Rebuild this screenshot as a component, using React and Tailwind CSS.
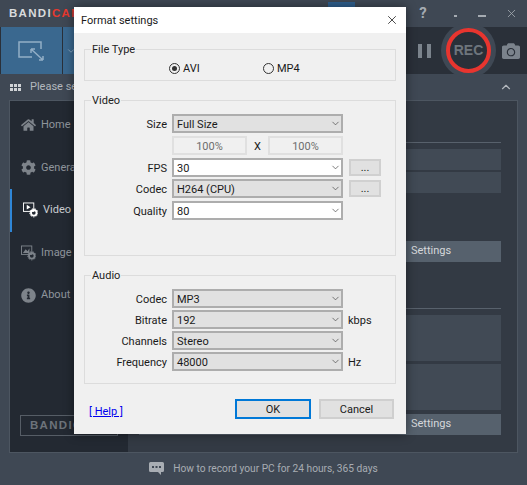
import { ChevronDown, ChevronUp, X } from "lucide-react";
import { FaHome, FaCog, FaInfoCircle, FaCamera } from "react-icons/fa";

const navItems = [
  { label: "Home", icon: <FaHome size={16} /> },
  { label: "General", icon: <FaCog size={15} /> },
  { label: "Video", icon: <VideoIcon />, active: true },
  { label: "Image", icon: <ImageIcon /> },
  { label: "About", icon: <FaInfoCircle size={15} /> },
];

function VideoIcon() {
  return (
    <svg width="16" height="16" viewBox="0 0 16 16" className="text-white">
      <rect x="0.5" y="0.5" width="11" height="9" fill="none" stroke="currentColor" />
      <path d="M4 2.5v5l4-2.5z" fill="currentColor" />
      <circle cx="11.5" cy="11" r="3" fill="none" stroke="currentColor" strokeWidth="2" />
      <circle cx="11.5" cy="11" r="4.4" fill="none" stroke="currentColor" strokeDasharray="1.5 1.5" />
    </svg>
  );
}

function ImageIcon() {
  return (
    <svg width="16" height="16" viewBox="0 0 16 16">
      <rect x="0.5" y="0.5" width="11" height="9" fill="none" stroke="currentColor" />
      <path d="M2 8l3-4 2 2 2-3v5z" fill="currentColor" />
      <circle cx="11.5" cy="11" r="3" fill="none" stroke="currentColor" strokeWidth="2" />
      <circle cx="11.5" cy="11" r="4.4" fill="none" stroke="currentColor" strokeDasharray="1.5 1.5" />
    </svg>
  );
}

const TipIcon = () => (
  <svg width="15" height="14" viewBox="0 0 15 14">
    <path d="M1.5 0h12A1.5 1.5 0 0 1 15 1.5v7A1.5 1.5 0 0 1 13.5 10H12v3l-3-3H1.5A1.5 1.5 0 0 1 0 8.5v-7A1.5 1.5 0 0 1 1.5 0z" fill="#a8adb3" />
    <rect x="3" y="4" width="2" height="2" fill="#3f4854" />
    <rect x="6.5" y="4" width="2" height="2" fill="#3f4854" />
    <rect x="10" y="4" width="2" height="2" fill="#3f4854" />
  </svg>
);

const Select = ({ value, editable }) => (
  <div
    className={`flex h-[19px] w-[171px] items-center justify-between border-2 border-[#adadad] pl-[3px] ${
      editable ? "bg-white" : "bg-[#e1e1e1]"
    }`}
  >
    <span className="pt-[1px]">{value}</span>
    <ChevronDown size={11} strokeWidth={1.5} className="text-[#444]" />
  </div>
);

const Row = ({ label, value, editable, children, className = "" }) => (
  <div className={`flex items-center ${className}`}>
    <span className="w-[87px] pr-[5px] pt-[1px] text-right">{label}</span>
    <Select value={value} editable={editable} />
    {children}
  </div>
);

const MoreButton = () => (
  <div className="ml-[6px] flex h-[17px] w-[32px] items-center justify-center border-2 border-[#d0d0d0] bg-[#e1e1e1] leading-none">
    ...
  </div>
);

const Group = ({ title, className, children }) => (
  <fieldset className={`mx-[10px] border border-[#dcdcdc] ${className}`}>
    <legend className="ml-[6px] px-[1px] pt-[1px] leading-[13px] text-[#222]">{title}</legend>
    {children}
  </fieldset>
);

const FormatDialog = () => (
  <div className="absolute left-[74px] top-[7px] flex h-[427px] w-[332px] flex-col bg-[#f0f0f0] text-[11px] leading-none text-[#1a1a1a] shadow-[0_0_10px_rgba(0,0,0,0.45)] [font-family:Roboto,sans-serif]">
    <div className="flex h-[26px] shrink-0 items-center justify-between bg-white pl-[7px] pr-[7px] text-[11px]">
      <span>Format settings</span>
      <X size={14} strokeWidth={1.2} className="text-black" />
    </div>
    <Group title="File Type" className="mt-[9px] h-[39px]">
      <div className="flex pl-[84px] pt-[7px]">
        <div className="flex w-[94px] items-center gap-[3px]">
          <span className="flex h-[11px] w-[11px] items-center justify-center rounded-full border border-[#333]">
            <span className="h-[5px] w-[5px] rounded-full bg-[#333]" />
          </span>
          AVI
        </div>
        <div className="flex items-center gap-[3px]">
          <span className="h-[11px] w-[11px] rounded-full border border-[#333]" />
          MP4
        </div>
      </div>
    </Group>
    <Group title="Video" className="mt-[12px] h-[163px]">
      <div className="flex flex-col pt-[7px]">
        <Row label="Size" value="Full Size" />
        <div className="mt-[3px] flex items-center pl-[87px]">
          <div className="flex h-[19px] w-[75px] items-center justify-center border-2 border-[#e0e0e0] pt-[1px] text-[#6d6d6d]">100%</div>
          <span className="w-[21px] pt-[1px] text-center">X</span>
          <div className="flex h-[19px] w-[75px] items-center justify-center border-2 border-[#e0e0e0] pt-[1px] text-[#6d6d6d]">100%</div>
        </div>
        <Row label="FPS" value="30" editable className="mt-[3px]">
          <MoreButton />
        </Row>
        <Row label="Codec" value="H264 (CPU)" className="mt-[2px]">
          <MoreButton />
        </Row>
        <Row label="Quality" value="80" editable className="mt-[3px]" />
      </div>
    </Group>
    <Group title="Audio" className="mt-[12px] h-[116px]">
      <div className="flex flex-col gap-[2px] pt-[7px]">
        <Row label="Codec" value="MP3" />
        <Row label="Bitrate" value="192">
          <span className="ml-[5px] pt-[1px]">kbps</span>
        </Row>
        <Row label="Channels" value="Stereo" />
        <Row label="Frequency" value="48000">
          <span className="ml-[5px] pt-[1px]">Hz</span>
        </Row>
      </div>
    </Group>
    <div className="mt-[15px] flex items-center justify-between pl-[15px] pr-[12px]">
      <span className="mt-[4px] text-[#0000ee] underline">[ Help ]</span>
      <div className="flex gap-[8px]">
        <div className="flex h-[20px] w-[76px] items-center justify-center border-2 border-[#0078d7] bg-[#e1e1e1] pt-[1px]">OK</div>
        <div className="flex h-[20px] w-[75px] items-center justify-center border-2 border-[#cfcfcf] bg-[#e1e1e1] pt-[1px]">Cancel</div>
      </div>
    </div>
  </div>
);

const SettingsRow = () => (
  <div className="flex h-[21px] items-center bg-[#56616d] pl-[272px] text-[#d5d8db]">Settings</div>
);

const TopBump = ({ className = "" }) => (
  <span className={`mt-[5px] h-[2px] w-[6px] rounded-t-sm bg-[#7b838c] ${className}`} />
);

const App = () => (
  <div className="relative h-[485px] w-[527px] overflow-hidden bg-[#3f4854] text-[11px] [font-family:Roboto,sans-serif]">
    {/* top bar */}
    <div className="flex h-[27px] items-center justify-between pl-[9px] pr-[9px] text-[#a5abb2]">
      <span className="text-[11.5px] font-bold tracking-[1.3px] text-[#d9dbdd] [font-family:'Liberation_Sans',sans-serif]">
        BANDI<span className="text-[#e8392f]">CAM</span>
      </span>
      <div className="flex items-center">
        <div className="flex h-[7px] w-[27px] self-start justify-center bg-[#2f5f8e]">
          <TopBump />
        </div>
        <TopBump className="ml-[9px] self-start" />
        <TopBump className="ml-[23px] self-start" />
        <span className="ml-[19px] w-[10px] text-center text-[15px] font-bold">?</span>
        <span className="ml-[26px] mt-[5px] h-[2px] w-[3px] bg-[#a5abb2]" />
        <span className="ml-[21px] mt-[5px] h-[2px] w-[8px] bg-[#a5abb2]" />
        <X size={13} strokeWidth={1.5} className="ml-[19px]" />
      </div>
    </div>

    {/* mode toolbar */}
    <div className="relative flex h-[47px] bg-[#2a3039]">
      <div className="ml-[1px] flex w-[61px] items-center justify-center bg-[#3a688f]">
        <svg width="28" height="20" viewBox="0 0 28 20" fill="none" stroke="#92aec6" strokeWidth="1.5">
          <path d="M14 16H1V1h22v7" />
          <path d="M13 8l12 11M13 8v4M13 8h4M25 19v-4M25 19h-4" />
        </svg>
      </div>
      <div className="ml-[1px] flex w-[40px] items-center bg-[#3a688f] pl-[3px] text-[#92aec6]">
        <ChevronDown size={10} />
      </div>
      <div className="ml-auto flex items-center pr-[7px] text-[#7b838c]">
        <div className="mr-[10px] flex gap-[5px]">
          <span className="h-[14px] w-[4px] bg-current" />
          <span className="h-[14px] w-[4px] bg-current" />
        </div>
        <div className="flex h-[55px] w-[55px] items-center justify-center rounded-full bg-[#3f4854]">
          <div className="flex h-[45px] w-[45px] items-center justify-center rounded-full border-[4px] border-[#e8352f] bg-[#2a3039] text-[14px] font-bold text-[#6e757d] [font-family:'Liberation_Sans',sans-serif]">
            REC
          </div>
        </div>
        <FaCamera size={18} className="ml-[6px]" />
      </div>
    </div>

    {/* mode hint */}
    <div className="flex h-[26px] items-center justify-between pl-[10px] pr-[14px] text-[#b3b8be]">
      <div className="flex items-center gap-[9px]">
        <div className="grid grid-cols-3 gap-[1px]">
          {Array.from({ length: 6 }).map((_, i) => (
            <span key={i} className="h-[3px] w-[3px] bg-[#d0d3d6]" />
          ))}
        </div>
        Please select
      </div>
      <ChevronUp size={14} />
    </div>

    {/* main panel */}
    <div className="mx-[9px] flex h-[353px] border border-[#4d5661] bg-[#333a44]">
      <div className="relative flex w-[118px] flex-col bg-[#232932] pt-[3px]">
        {navItems.map((item) => (
          <div
            key={item.label}
            className={`flex h-[42.5px] items-center gap-[5px] pl-[11px] text-[#8f959c] ${
              item.active ? "border-l-[2px] border-[#2f86d6] pl-[9px] text-[#c9ccd0]" : ""
            }`}
          >
            <span className="flex w-[15px] justify-center text-[#7d838a]">{item.icon}</span>
            {item.label}
          </div>
        ))}
        <div className="mx-[10px] mt-auto mb-[16px] flex h-[21px] items-center border border-[#565d66] pl-[9px] text-[11.5px] font-bold tracking-[1.3px] text-[#6d737a] [font-family:'Liberation_Sans',sans-serif]">
          BANDICAM
        </div>
      </div>
      <div className="flex flex-1 flex-col pl-[11px] pr-[16px] pt-[41px]">
        <div className="h-[1px] bg-[#58616c]" />
        <div className="mt-[6px] h-[21px] bg-[#414a55]" />
        <div className="mt-[2px] h-[21px] bg-[#414a55]" />
        <div className="mt-[48px]">
          <SettingsRow />
        </div>
        <div className="mt-[46px] h-[1px] bg-[#58616c]" />
        <div className="mt-[6px] h-[46px] bg-[#414a55]" />
        <div className="mt-[3px] h-[46px] bg-[#414a55]" />
        <div className="mt-[4px]">
          <SettingsRow />
        </div>
      </div>
    </div>

    {/* footer tip */}
    <div className="flex h-[31px] items-center justify-center gap-[9px] text-[10.2px] text-[#a8adb3]">
      <TipIcon />
      How to record your PC for 24 hours, 365 days
    </div>

    <FormatDialog />
  </div>
);

export default App;
